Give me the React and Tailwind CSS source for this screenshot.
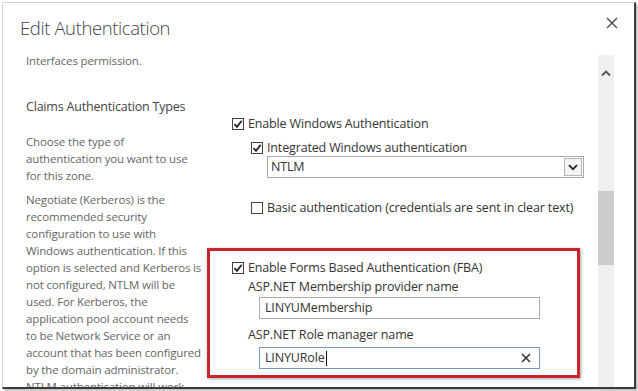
import React from 'react';

const font = { fontFamily: '"Open Sans", "Noto Sans", sans-serif' };

function CheckBox({ checked }) {
  return (
    <span className="w-[12px] h-[12px] border border-[#444] bg-white flex items-center justify-center shrink-0">
      {checked && (
        <svg width="10" height="10" viewBox="0 0 10 10">
          <path d="M1.5 5.2 L4 7.8 L8.7 1.8" fill="none" stroke="#222" strokeWidth="1.8" />
        </svg>
      )}
    </span>
  );
}

function CheckRow({ checked, label, className = '' }) {
  return (
    <div className={`flex items-center gap-[4px] h-[17px] text-[12.5px] tracking-[-0.15px] text-[#333] ${className}`}>
      <CheckBox checked={checked} />
      <span className="leading-[17px] whitespace-nowrap">{label}</span>
    </div>
  );
}

const para1 = ['Choose the type of', 'authentication you want to use', 'for this zone.'];
const para2 = [
  'Negotiate (Kerberos) is the',
  'recommended security',
  'configuration to use with',
  'Windows authentication. If this',
  'option is selected and Kerberos is',
  'not configured, NTLM will be',
  'used. For Kerberos, the',
  'application pool account needs',
  'to be Network Service or an',
  'account that has been configured',
  'by the domain administrator.',
  'NTLM authentication will work',
  'with any application pool account',
];

export default function App() {
  return (
    <div className="w-[638px] h-[391px] bg-white pl-[2px] pt-[2px] overflow-hidden" style={font}>
      <div className="w-[634px] h-[387px] flex flex-col bg-white border-t border-l border-[#d4d4d4] border-r-2 border-b-2 border-r-[#3a3a3a] border-b-[#3a3a3a] shadow-[2px_2px_2px_rgba(0,0,0,0.25)]">
        {/* Header */}
        <div className="flex items-start justify-between pt-[10px] pl-[17px] pr-[16px] h-[40px] shrink-0">
          <h1 className="text-[18.5px] tracking-[-0.4px] leading-[30px] font-light text-[#444]">Edit Authentication</h1>
          <svg width="12" height="12" viewBox="0 0 12 12" className="mt-[4px]">
            <path d="M1 1 L11 11 M11 1 L1 11" stroke="#555" strokeWidth="1.5" />
          </svg>
        </div>

        {/* Body */}
        <div className="flex flex-1 min-h-0">
          <div className="flex-1 overflow-hidden pl-[23px]">
            <p className="mt-[9px] text-[11.5px] tracking-[-0.15px] leading-[17px] text-[#666]">Interfaces permission.</p>

            <div className="flex mt-[29px]">
              {/* Left description column */}
              <div className="w-[181px] shrink-0 text-[#666]">
                <h2 className="text-[12.5px] tracking-[-0.2px] leading-[18px] text-[#444]">Claims Authentication Types</h2>
                <div className="mt-[17px] text-[11.5px] tracking-[-0.15px] leading-[17px]">
                  {para1.map((l) => (
                    <div key={l} className="whitespace-nowrap">{l}</div>
                  ))}
                </div>
                <div className="mt-[7px] text-[11.5px] tracking-[-0.15px] leading-[17px]">
                  {para2.map((l) => (
                    <div key={l} className="whitespace-nowrap">{l}</div>
                  ))}
                </div>
              </div>

              {/* Right settings column */}
              <div className="flex flex-col pt-[17px]">
                <CheckRow checked label="Enable Windows Authentication" className="ml-[25px]" />
                <CheckRow checked label="Integrated Windows authentication" className="ml-[44px] mt-[7px]" />
                <div className="ml-[60px] w-[317px] h-[22px] border border-[#ababab] flex items-center justify-between pl-[3px]">
                  <span className="text-[12.5px] tracking-[-0.15px] text-[#333]">NTLM</span>
                  <span className="w-[18px] h-[18px] mr-[1px] border border-[#b5b5b5] bg-[#f4f4f4] flex items-center justify-center">
                    <svg width="10" height="7" viewBox="0 0 10 7">
                      <path d="M1 1.2 L5 5.2 L9 1.2" fill="none" stroke="#222" strokeWidth="1.8" />
                    </svg>
                  </span>
                </div>
                <CheckRow label="Basic authentication (credentials are sent in clear text)" className="ml-[44px] mt-[21px]" />

                {/* Highlighted FBA section */}
                <div className="mt-[32px] w-[373px] border-[3px] border-[#c9252b] shadow-[1px_1px_3px_rgba(0,0,0,0.35)] pt-[8px] pb-[6px]">
                  <CheckRow checked label="Enable Forms Based Authentication (FBA)" className="ml-[22px]" />
                  <div className="ml-[38px] mt-[2px] text-[12.5px] tracking-[-0.15px] leading-[17px] text-[#333]">ASP.NET Membership provider name</div>
                  <div className="ml-[49px] mt-[2px] w-[281px] h-[22px] border border-[#ababab] flex items-center px-[5px] text-[12.5px] tracking-[-0.15px] text-[#333]">
                    LINYUMembership
                  </div>
                  <div className="ml-[38px] mt-[7px] text-[12.5px] tracking-[-0.15px] leading-[17px] text-[#333]">ASP.NET Role manager name</div>
                  <div className="ml-[49px] mt-[4px] w-[281px] h-[22px] border border-[#7a9cb8] flex items-center justify-between pl-[5px] pr-[8px] text-[12.5px] tracking-[-0.15px] text-[#333]">
                    <span className="flex items-center">
                      LINYURole<span className="w-px h-[15px] bg-[#111] ml-px" />
                    </span>
                    <svg width="10" height="10" viewBox="0 0 10 10">
                      <path d="M1 1 L9 9 M9 1 L1 9" stroke="#333" strokeWidth="1.6" />
                    </svg>
                  </div>
                </div>
              </div>
            </div>
          </div>

          {/* Scrollbar */}
          <div className="w-[16px] mt-[12px] mr-[20px] bg-[#f0f0f0] flex flex-col items-center shrink-0">
            <svg width="10" height="7" viewBox="0 0 10 7" className="mt-[15px]">
              <path d="M1 5.5 L5 1.5 L9 5.5" fill="none" stroke="#555" strokeWidth="1.8" />
            </svg>
            <div className="w-full h-[74px] mt-[114px] bg-[#cdcdcd]" />
          </div>
        </div>
      </div>
    </div>
  );
}
